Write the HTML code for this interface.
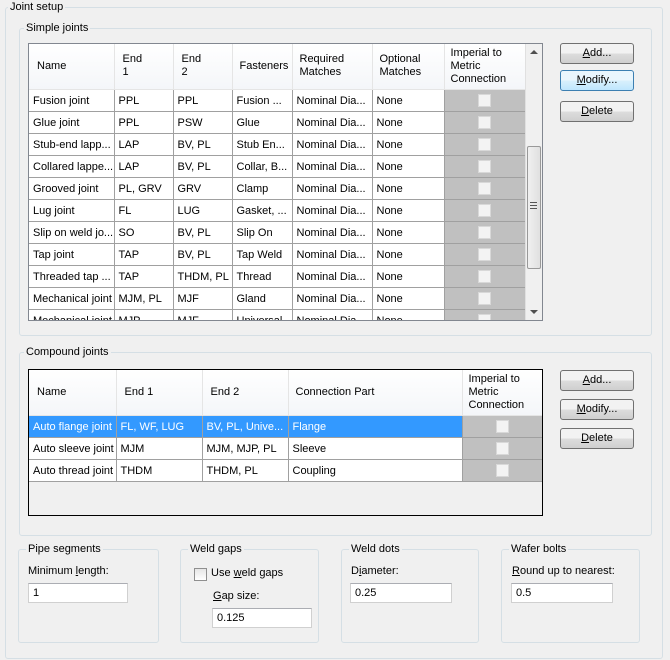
<!DOCTYPE html>
<html><head><meta charset="utf-8"><style>
*{box-sizing:border-box;margin:0;padding:0}
body{width:670px;height:660px;background:#f0f0f0;font-family:"Liberation Sans",Tahoma,sans-serif;font-size:11px;color:#000;position:relative;overflow:hidden}
.abs{position:absolute}
.grp{position:absolute;border:1px solid #d5dfe5;border-radius:3px}
.lbl{position:absolute;background:#f0f0f0;padding:0 2px;line-height:14px;top:-8px;left:6px}
table{border-collapse:collapse;table-layout:fixed}
td{border-right:1px solid #a0a0a0;border-bottom:1px solid #a0a0a0;height:22px;padding:1px 0 0 4px;white-space:nowrap;overflow:hidden;text-overflow:ellipsis;background:#fff;vertical-align:middle}
th{font-weight:normal;text-align:left;padding:0 0 0 8px;border-right:1px solid #e5e5e5;border-bottom:1px solid #e5e5e5;background:linear-gradient(#fff,#f4f6f9);height:45px;line-height:13px;vertical-align:middle}
td.c{background:#c0c0c0;padding:0;text-align:center}
.cb{display:inline-block;width:13px;height:13px;background:#f3f3f3;border:1px solid #d8d8d8;vertical-align:middle}
.btn{position:absolute;width:74px;height:21px;border:1px solid #707070;border-radius:3px;background:linear-gradient(#f2f2f2 50%,#dddddd 50%,#cfcfcf);text-align:center;line-height:19px}
.inp{position:absolute;height:20px;border:1px solid #d0d0d0;border-top-color:#abadb3;background:#fff;padding-left:4px;line-height:18px}
tr.sel td{background:#3399ff;color:#fff}
tr.sel td.c{background:#c0c0c0}
</style></head><body>
<div class="grp" style="left:5px;top:7px;width:658px;height:652px"><span class="lbl" style="left:2px">Joint setup</span></div>
<div class="grp" style="left:19px;top:28px;width:633px;height:308px"><span class="lbl" style="left:4px">Simple joints</span></div>

<div class="abs" style="left:28px;top:43px;width:515px;height:278px;border:1px solid #828790;overflow:hidden;background:#fff">
<table style="width:496px">
<colgroup><col style="width:85px"><col style="width:59px"><col style="width:59px"><col style="width:60px"><col style="width:80px"><col style="width:72px"><col style="width:81px"></colgroup>
<tr><th>Name</th><th>End<br>1</th><th>End<br>2</th><th style="padding-left:7px">Fasteners</th><th style="padding-left:7px">Required<br>Matches</th><th style="padding-left:7px">Optional<br>Matches</th><th style="padding-left:6px">Imperial to<br>Metric<br>Connection</th></tr>
<tr><td>Fusion joint</td><td>PPL</td><td>PPL</td><td>Fusion ...</td><td>Nominal Dia...</td><td>None</td><td class="c"><span class="cb"></span></td></tr>
<tr><td>Glue joint</td><td>PPL</td><td>PSW</td><td>Glue</td><td>Nominal Dia...</td><td>None</td><td class="c"><span class="cb"></span></td></tr>
<tr><td>Stub-end lapp...</td><td>LAP</td><td>BV, PL</td><td>Stub En...</td><td>Nominal Dia...</td><td>None</td><td class="c"><span class="cb"></span></td></tr>
<tr><td>Collared lappe...</td><td>LAP</td><td>BV, PL</td><td>Collar, B...</td><td>Nominal Dia...</td><td>None</td><td class="c"><span class="cb"></span></td></tr>
<tr><td>Grooved joint</td><td>PL, GRV</td><td>GRV</td><td>Clamp</td><td>Nominal Dia...</td><td>None</td><td class="c"><span class="cb"></span></td></tr>
<tr><td>Lug joint</td><td>FL</td><td>LUG</td><td>Gasket, ...</td><td>Nominal Dia...</td><td>None</td><td class="c"><span class="cb"></span></td></tr>
<tr><td>Slip on weld jo...</td><td>SO</td><td>BV, PL</td><td>Slip On</td><td>Nominal Dia...</td><td>None</td><td class="c"><span class="cb"></span></td></tr>
<tr><td>Tap joint</td><td>TAP</td><td>BV, PL</td><td>Tap Weld</td><td>Nominal Dia...</td><td>None</td><td class="c"><span class="cb"></span></td></tr>
<tr><td>Threaded tap ...</td><td>TAP</td><td>THDM, PL</td><td>Thread</td><td>Nominal Dia...</td><td>None</td><td class="c"><span class="cb"></span></td></tr>
<tr><td>Mechanical joint</td><td>MJM, PL</td><td>MJF</td><td>Gland</td><td>Nominal Dia...</td><td>None</td><td class="c"><span class="cb"></span></td></tr>
<tr><td>Mechanical joint</td><td>MJP</td><td>MJF</td><td>Universal</td><td>Nominal Dia...</td><td>None</td><td class="c"><span class="cb"></span></td></tr>
</table>
<div class="abs" style="left:496px;top:0;width:17px;height:276px;background:#f0f0f0;border-left:1px solid #e0e0e0">
<div class="abs" style="left:4px;top:6px;width:0;height:0;border:4px solid transparent;border-bottom:4px solid #505050;border-top:0"></div>
<div class="abs" style="left:1px;top:102px;width:14px;height:123px;border:1px solid #999;border-radius:2px;background:linear-gradient(90deg,#f0f0f0,#e0e0e0)"></div>
<div class="abs" style="left:4px;top:158px;width:7px;height:7px;border-top:1px solid #555;border-bottom:1px solid #555"><div style="margin-top:2px;border-top:1px solid #555"></div></div>
<div class="abs" style="left:4px;top:266px;width:0;height:0;border:4px solid transparent;border-top:4px solid #505050;border-bottom:0"></div>
</div>
</div>

<div class="btn" style="left:560px;top:43px"><u>A</u>dd...</div>
<div class="btn" style="left:560px;top:70px;border-color:#3c7fb1;background:linear-gradient(#eaf6fd 50%,#d9f0fc 50%,#bee6fd)"><u>M</u>odify...</div>
<div class="btn" style="left:560px;top:101px"><u>D</u>elete</div>

<div class="grp" style="left:19px;top:352px;width:633px;height:184px"><span class="lbl" style="left:4px">Compound joints</span></div>
<div class="abs" style="left:28px;top:369px;width:515px;height:147px;border:1px solid #000;overflow:hidden;background:#f0f0f0">
<table style="width:513px">
<colgroup><col style="width:87px"><col style="width:86px"><col style="width:86px"><col style="width:174px"><col style="width:80px"></colgroup>
<tr><th>Name</th><th>End 1</th><th>End 2</th><th style="padding-left:7px">Connection Part</th><th style="padding-left:6px">Imperial to<br>Metric<br>Connection</th></tr>
<tr class="sel"><td>Auto flange joint</td><td>FL, WF, LUG</td><td>BV, PL, Unive...</td><td>Flange</td><td class="c"><span class="cb"></span></td></tr>
<tr><td>Auto sleeve joint</td><td>MJM</td><td>MJM, MJP, PL</td><td>Sleeve</td><td class="c"><span class="cb"></span></td></tr>
<tr><td>Auto thread joint</td><td>THDM</td><td>THDM, PL</td><td>Coupling</td><td class="c"><span class="cb"></span></td></tr>
</table>
</div>
<div class="btn" style="left:560px;top:370px"><u>A</u>dd...</div>
<div class="btn" style="left:560px;top:399px"><u>M</u>odify...</div>
<div class="btn" style="left:560px;top:428px"><u>D</u>elete</div>

<div class="grp" style="left:18px;top:549px;width:141px;height:94px"><span class="lbl" style="left:7px">Pipe segments</span></div>
<div class="abs" style="left:28px;top:565px">Minimum <u>l</u>ength:</div>
<div class="inp" style="left:28px;top:583px;width:100px">1</div>

<div class="grp" style="left:180px;top:549px;width:139px;height:94px"><span class="lbl" style="left:7px">Weld gaps</span></div>
<div class="abs" style="left:194px;top:568px;width:13px;height:13px;border:1px solid #8f8f8f;background:linear-gradient(#e6e6e6,#fff)"></div>
<div class="abs" style="left:211px;top:567px">Use <u>w</u>eld gaps</div>
<div class="abs" style="left:213px;top:590px"><u>G</u>ap size:</div>
<div class="inp" style="left:212px;top:608px;width:100px">0.125</div>

<div class="grp" style="left:341px;top:549px;width:138px;height:94px"><span class="lbl" style="left:7px">Weld dots</span></div>
<div class="abs" style="left:351px;top:565px">D<u>i</u>ameter:</div>
<div class="inp" style="left:350px;top:583px;width:102px">0.25</div>

<div class="grp" style="left:501px;top:549px;width:139px;height:94px"><span class="lbl" style="left:7px">Wafer bolts</span></div>
<div class="abs" style="left:512px;top:565px"><u>R</u>ound up to nearest:</div>
<div class="inp" style="left:511px;top:583px;width:102px">0.5</div>
</body></html>
